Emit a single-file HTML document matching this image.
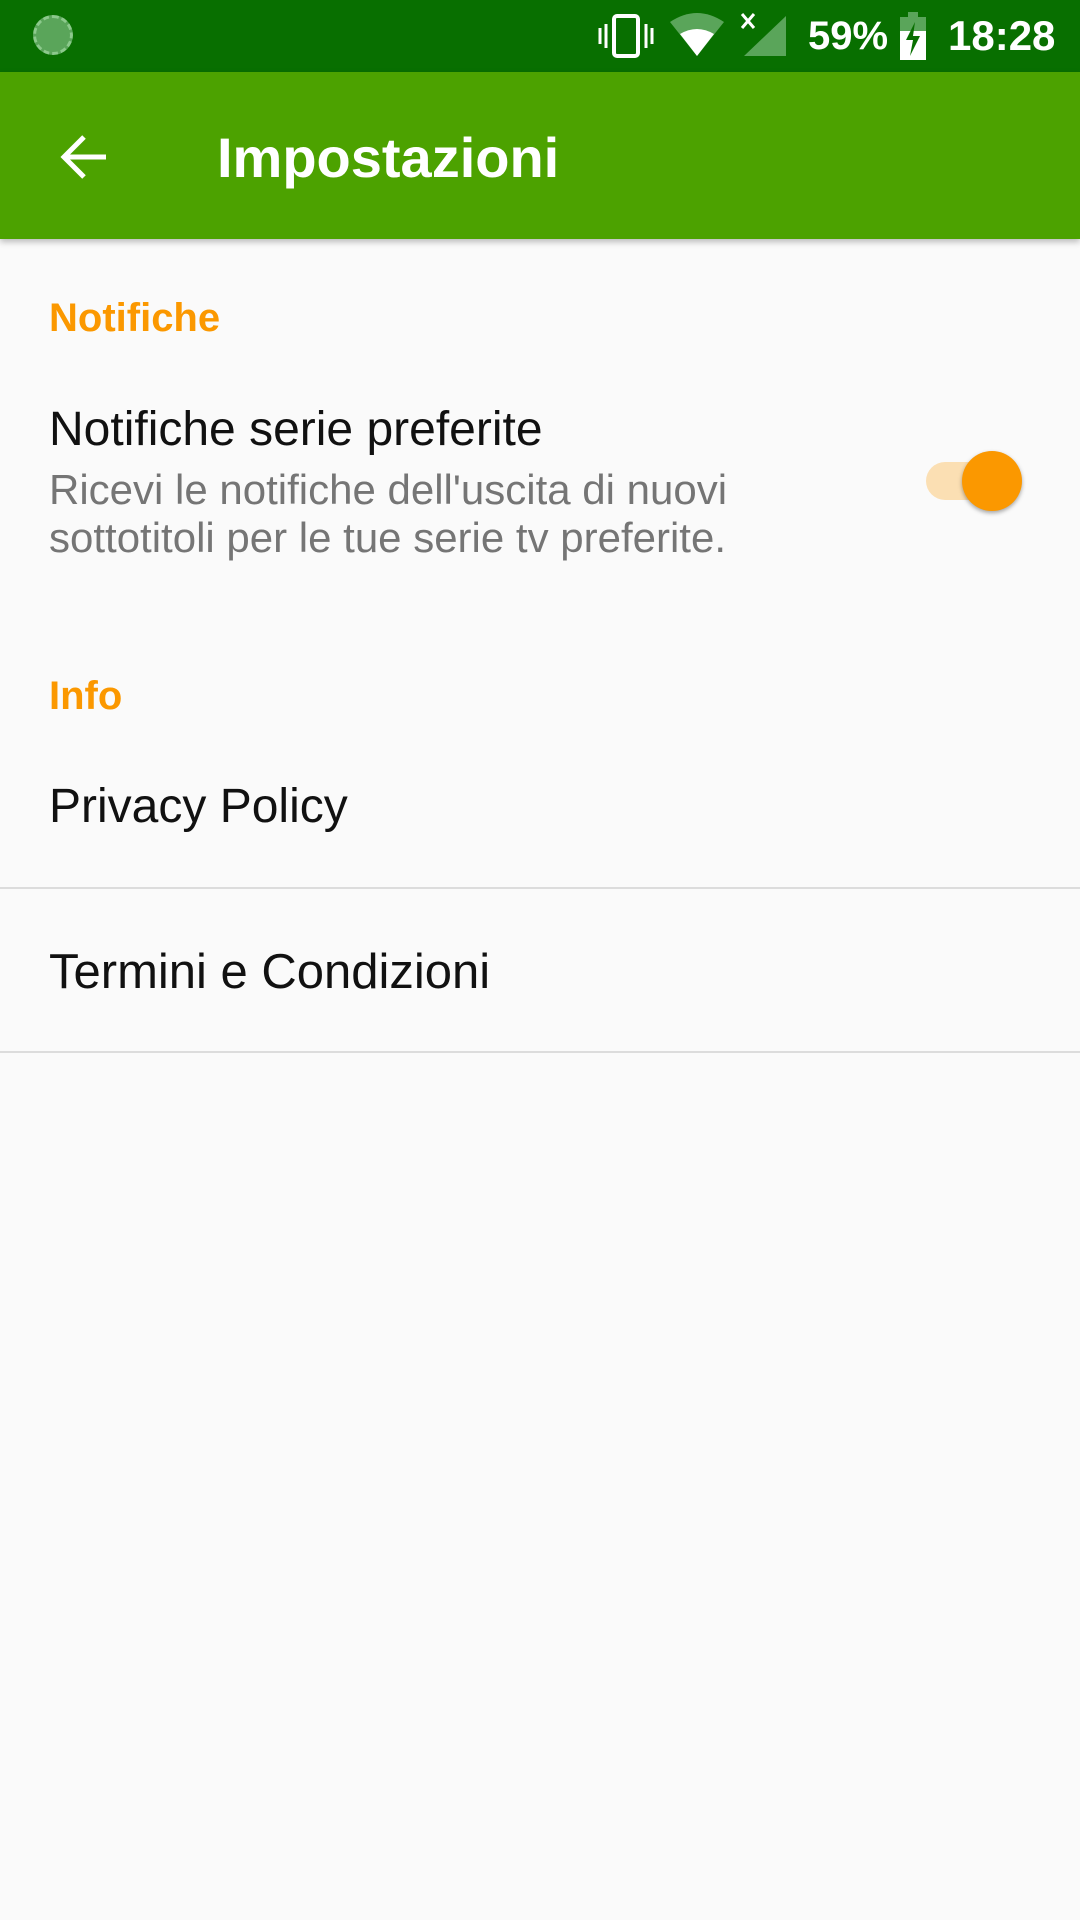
<!DOCTYPE html>
<html><head><meta charset="utf-8"><style>
*{margin:0;padding:0;box-sizing:border-box}
body{width:1080px;height:1920px;background:#fafafa;font-family:"Liberation Sans",sans-serif;position:relative;overflow:hidden}
.abs{position:absolute;white-space:nowrap}
</style></head><body>
<div class="abs" style="left:0;top:0;width:1080px;height:72px;background:#086f00"></div>
<div class="abs" style="left:33px;top:15px;width:40px;height:40px;border-radius:50%;background:#5aa55a;border:3px dashed #8cc98c"></div>
<svg class="abs" style="left:598px;top:12px" width="56" height="48" viewBox="0 0 56 48"><rect x="16" y="4" width="24" height="40" rx="3" fill="none" stroke="#fff" stroke-width="4"/><path d="M8 12v24M2 16v16M48 12v24M54 16v16" stroke="#fff" stroke-width="3"/></svg>
<svg class="abs" style="left:670px;top:12px" width="54" height="46" viewBox="0 0 54 46"><path d="M0 10Q27-8 54 10L27 44Z" fill="#5aa55a"/><path d="M10 22Q27 12 44 22L27 44Z" fill="#fff"/></svg>
<svg class="abs" style="left:740px;top:12px" width="48" height="46" viewBox="0 0 48 46"><path d="M46 4V44H4Z" fill="#5aa55a"/><path d="M2 2L14 16M14 2L2 16" stroke="#fff" stroke-width="3"/></svg>
<div class="abs" style="left:808px;top:12px;font-size:40px;color:#fff;font-weight:bold;line-height:48px">59%</div>
<svg class="abs" style="left:900px;top:12px" width="26" height="48" viewBox="0 0 26 48"><rect x="8" y="0" width="10" height="5" fill="#5aa55a"/><rect x="0" y="5" width="26" height="14" fill="#5aa55a"/><rect x="0" y="19" width="26" height="29" fill="#fff"/><path d="M15 10L6 28h7l-3 16 10-20h-7z" fill="#086f00"/></svg>
<div class="abs" style="left:948px;top:12px;font-size:42px;color:#fff;font-weight:bold;line-height:48px">18:28</div>
<div class="abs" style="left:0;top:72px;width:1080px;height:167px;background:#4ca200;box-shadow:0 3px 6px rgba(0,0,0,.25)"></div>
<svg class="abs" style="left:58px;top:133px" width="52" height="48" viewBox="0 0 52 48"><path d="M48 24H6M26 4L6 24l20 20" fill="none" stroke="#fff" stroke-width="5"/></svg>
<div class="abs" style="left:217px;top:123px;font-size:56px;color:#fff;font-weight:bold;line-height:70px">Impostazioni</div>
<div class="abs" style="left:49px;top:294px;font-size:40px;color:#fb9800;font-weight:bold;line-height:48px">Notifiche</div>
<div class="abs" style="left:49px;top:401px;font-size:48px;color:#111;line-height:58px">Notifiche serie preferite</div>
<div class="abs" style="left:49px;top:466px;font-size:42px;color:#757575;line-height:48px">Ricevi le notifiche dell'uscita di nuovi<br>sottotitoli per le tue serie tv preferite.</div>
<div class="abs" style="left:926px;top:462px;width:78px;height:38px;border-radius:19px;background:#fbdfb3"></div>
<div class="abs" style="left:962px;top:451px;width:60px;height:60px;border-radius:50%;background:#fb9800;box-shadow:0 2px 4px rgba(0,0,0,.35)"></div>
<div class="abs" style="left:49px;top:672px;font-size:40px;color:#fb9800;font-weight:bold;line-height:48px">Info</div>
<div class="abs" style="left:49px;top:778px;font-size:48px;color:#111;line-height:58px">Privacy Policy</div>
<div class="abs" style="left:0;top:887px;width:1080px;height:2px;background:#dcdcdc"></div>
<div class="abs" style="left:49px;top:943px;font-size:49px;color:#111;line-height:58px">Termini e Condizioni</div>
<div class="abs" style="left:0;top:1051px;width:1080px;height:2px;background:#dcdcdc"></div>
</body></html>
